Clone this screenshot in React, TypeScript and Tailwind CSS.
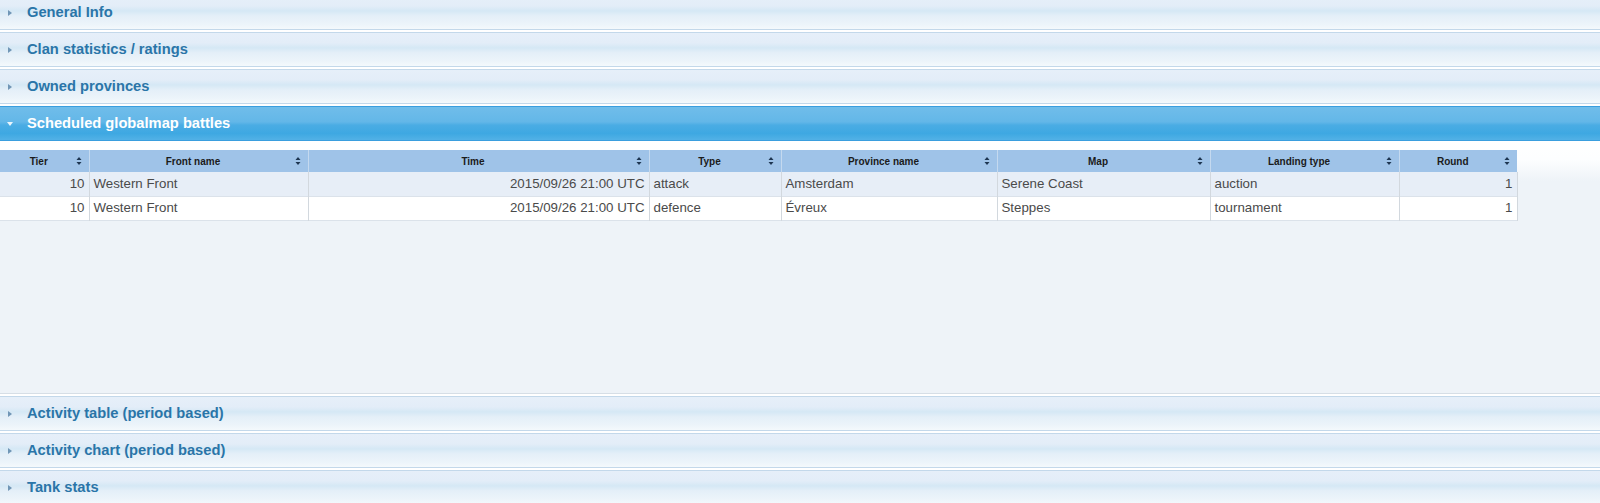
import React from "react";

const topSections = ["General Info", "Clan statistics / ratings", "Owned provinces"];
const bottomSections = ["Activity table (period based)", "Activity chart (period based)", "Tank stats"];

const columns = [
  { label: "Tier", width: 89 },
  { label: "Front name", width: 219 },
  { label: "Time", width: 341 },
  { label: "Type", width: 132 },
  { label: "Province name", width: 216 },
  { label: "Map", width: 213 },
  { label: "Landing type", width: 189 },
  { label: "Round", width: 118 },
];

const battles = [
  { tier: 10, front: "Western Front", time: "2015/09/26 21:00 UTC", type: "attack", province: "Amsterdam", map: "Serene Coast", landing: "auction", round: 1 },
  { tier: 10, front: "Western Front", time: "2015/09/26 21:00 UTC", type: "defence", province: "Évreux", map: "Steppes", landing: "tournament", round: 1 },
];

function SortIcon() {
  return (
    <svg width="6" height="9" viewBox="0 0 6 9" className="absolute right-[7px] top-1/2 -translate-y-1/2">
      <path d="M3 0.5 L5.5 3.5 H0.5 Z" fill="#1d3550" />
      <path d="M3 8.5 L5.5 5.5 H0.5 Z" fill="#1d3550" />
    </svg>
  );
}

function CollapsedHeader({ title }: { title: string }) {
  return (
    <div className="mt-[2px] h-[35px] flex items-center border-y border-[#c3d8ea] bg-[linear-gradient(to_bottom,#e6eff9_0%,#e3edf8_30%,#d5e8f5_45%,#e4eff8_60%,#ecf4fa_85%,#f4f9fc_100%)] cursor-pointer">
      <svg width="4" height="6" viewBox="0 0 4 6" className="ml-[8px] mr-[15px]">
        <path d="M0 0 L4 3 L0 6 Z" fill="#7096b6" />
      </svg>
      <span className="text-[14.7px] font-bold text-[#2a75a8]">{title}</span>
    </div>
  );
}

export default function App() {
  return (
    <div className="h-[503px] overflow-hidden bg-white" style={{ fontFamily: '"Liberation Sans", Arial, sans-serif' }}>
      <div className="-mt-[7px]">
        {topSections.map((s) => (
          <CollapsedHeader key={s} title={s} />
        ))}

        {/* Active section */}
        <div className="mt-[2px] h-[35px] flex items-center border-y border-[#3a9ede] bg-[linear-gradient(to_bottom,#70bdea_0%,#63b7e8_45%,#4aace4_55%,#3ea8e2_80%,#52b1e6_100%)]">
          <svg width="6" height="4" viewBox="0 0 6 4" className="ml-[7px] mr-[14px]">
            <path d="M0 0 L6 0 L3 4 Z" fill="#eaf6fd" />
          </svg>
          <span className="text-[14.7px] font-bold text-white">Scheduled globalmap battles</span>
        </div>
        <div className="h-[253px] pt-[9px] border-b border-[#d6dee6] bg-[linear-gradient(to_bottom,#ffffff_0px,#fdfeff_18px,#eef3f8_40px,#eef3f8_100%)]">
          <table className="table-fixed border-collapse w-[1517px]">
            <colgroup>
              {columns.map((c) => (
                <col key={c.label} style={{ width: c.width }} />
              ))}
            </colgroup>
            <thead>
              <tr className="h-[22px] bg-[#9fc3e8]">
                {columns.map((c) => (
                  <th
                    key={c.label}
                    className="relative pl-[4px] pr-[15px] text-center text-[10px] font-bold text-[#1b1b1b] border-l border-[#c4d9ef] first:border-l-0"
                  >
                    {c.label}
                    <SortIcon />
                  </th>
                ))}
              </tr>
            </thead>
            <tbody className="text-[13.3px] text-[#4a4a4a]">
              {battles.map((b, i) => (
                <tr key={i} className={`h-[24px] border-b border-[#dbe2ea] ${i % 2 === 0 ? "bg-[#e7eef7]" : "bg-white"}`}>
                  <td className="px-[4px] text-right">{b.tier}</td>
                  <td className="px-[4px] border-l border-[#d2d8de]">{b.front}</td>
                  <td className="px-[4px] text-right border-l border-[#d2d8de]">{b.time}</td>
                  <td className="px-[4px] border-l border-[#d2d8de]">{b.type}</td>
                  <td className="px-[4px] border-l border-[#d2d8de]">{b.province}</td>
                  <td className="px-[4px] border-l border-[#d2d8de]">{b.map}</td>
                  <td className="px-[4px] border-l border-[#d2d8de]">{b.landing}</td>
                  <td className="px-[4px] text-right border-l border-r border-[#d2d8de]">{b.round}</td>
                </tr>
              ))}
            </tbody>
          </table>
        </div>

        {bottomSections.map((s) => (
          <CollapsedHeader key={s} title={s} />
        ))}
      </div>
    </div>
  );
}
